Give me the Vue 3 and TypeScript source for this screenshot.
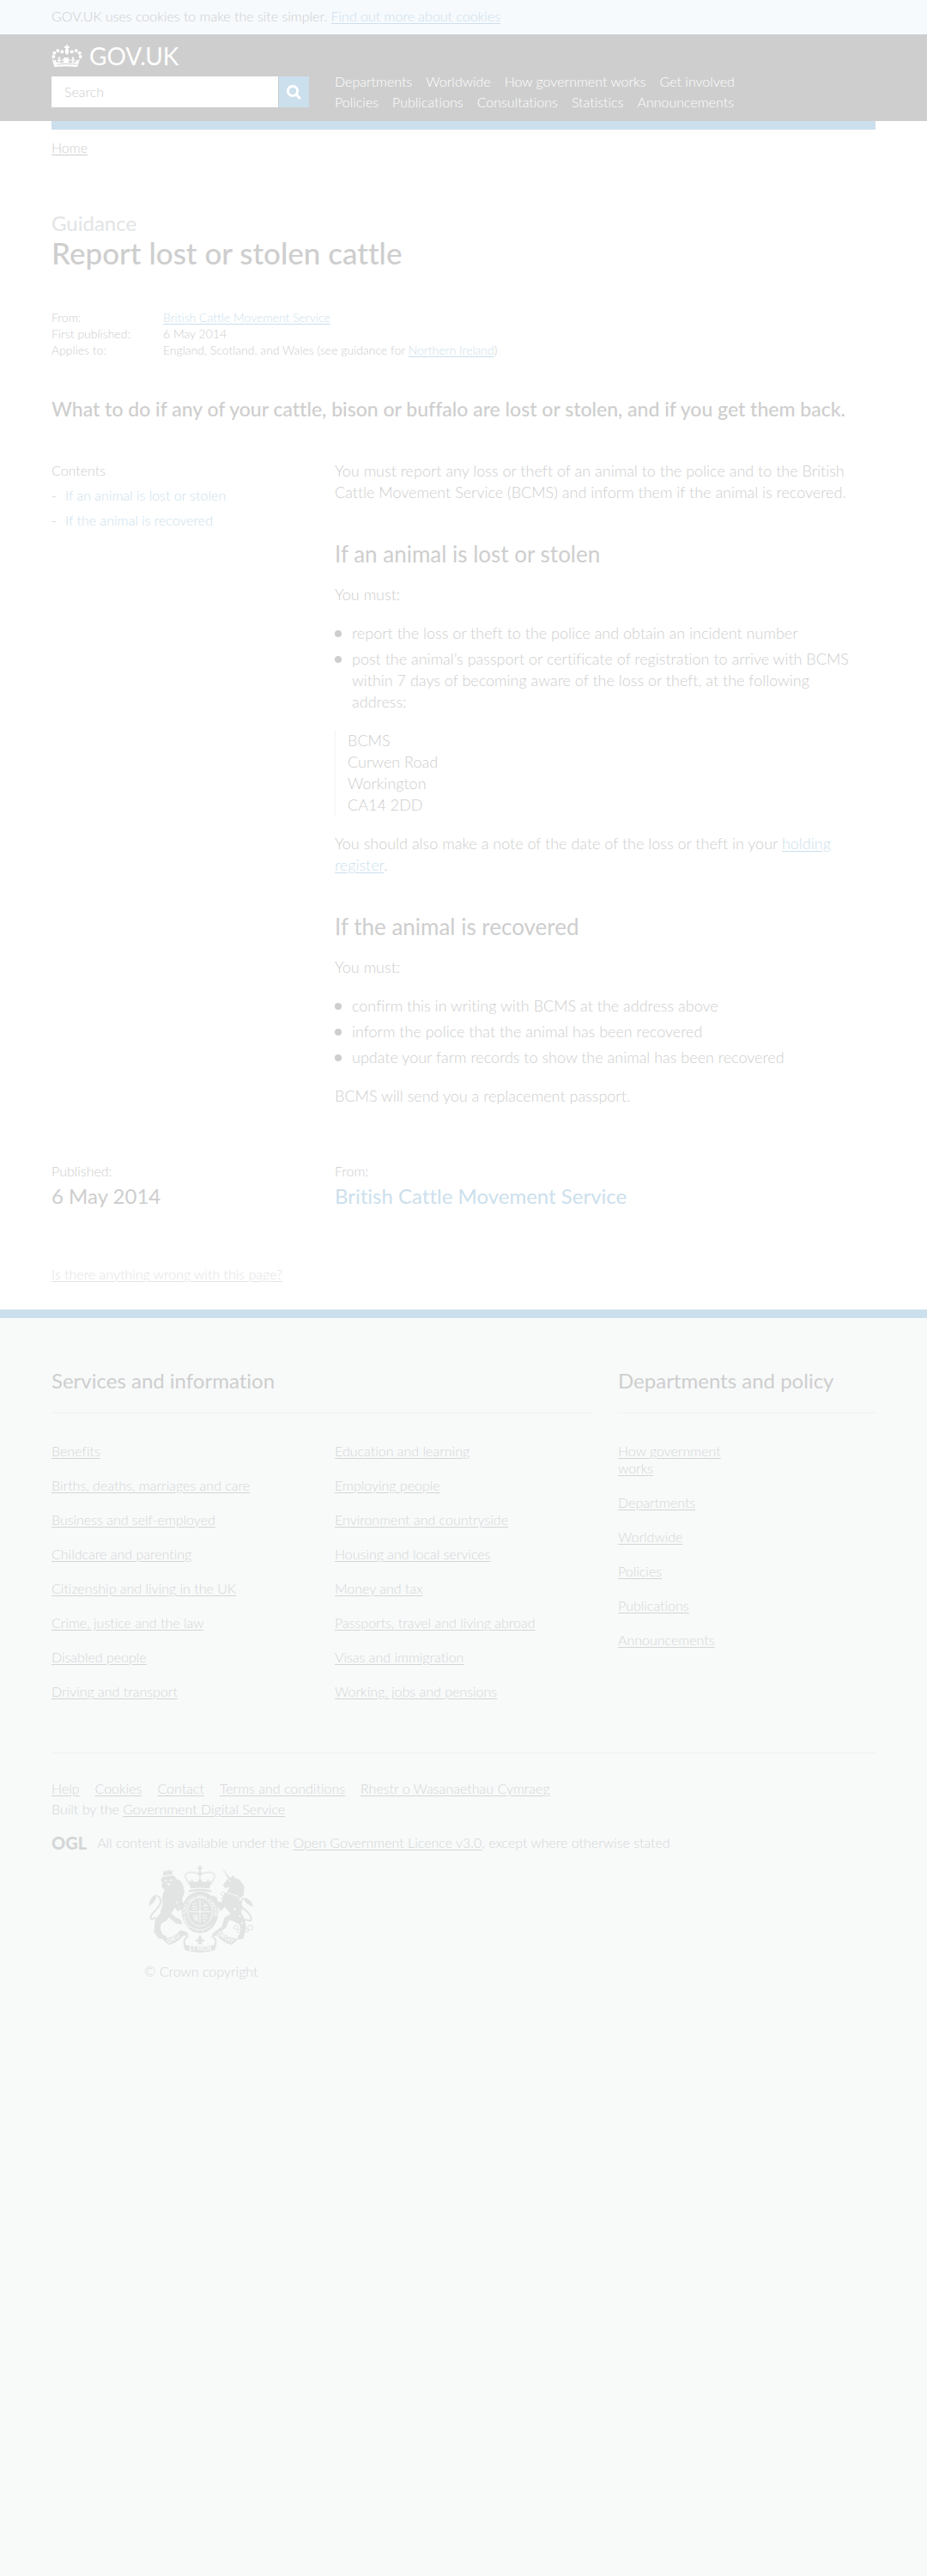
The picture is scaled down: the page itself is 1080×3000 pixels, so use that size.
<script setup lang="ts">
import { ref } from 'vue'

const query = ref('')

const navigation: string[] = [
  'Departments', 'Worldwide', 'How government works', 'Get involved',
  'Policies', 'Publications', 'Consultations', 'Statistics', 'Announcements',
]

const contents = [
  { id: 'if-an-animal-is-lost-or-stolen', title: 'If an animal is lost or stolen' },
  { id: 'if-the-animal-is-recovered', title: 'If the animal is recovered' },
]

const services: string[][] = [
  [
    'Benefits', 'Births, deaths, marriages and care', 'Business and self-employed',
    'Childcare and parenting', 'Citizenship and living in the UK',
    'Crime, justice and the law', 'Disabled people', 'Driving and transport',
  ],
  [
    'Education and learning', 'Employing people', 'Environment and countryside',
    'Housing and local services', 'Money and tax',
    'Passports, travel and living abroad', 'Visas and immigration',
    'Working, jobs and pensions',
  ],
]

const policy: string[] = [
  'How government works', 'Departments', 'Worldwide', 'Policies', 'Publications', 'Announcements',
]

const support: string[] = [
  'Help', 'Cookies', 'Contact', 'Terms and conditions', 'Rhestr o Wasanaethau Cymraeg',
]

const crownPearls = [
  [37, 78], [40, 65], [52, 57], [67, 61], [101, 61], [116, 57], [128, 65], [131, 78],
]
</script>

<template>
  <div class="page">
    <div class="cookie-bar">
      <p class="wrap">GOV.UK uses cookies to make the site simpler. <a href="#">Find out more about cookies</a></p>
    </div>

    <header class="site-header">
      <div class="wrap columns">
        <div class="brand">
          <a class="logo" href="#">
            <svg class="crown" viewBox="31 36 106 78" aria-hidden="true">
              <circle v-for="([cx, cy], i) in crownPearls" :key="i" :cx="cx" :cy="cy" r="6" />
              <path d="M81 36h6l-1 6 7-1v7l-6-1 3 8q3 10-6 17-9-7-6-17l3-8-6 1v-7l7 1z" />
              <path fill-rule="evenodd" d="M32 84l8 8 5-4 1 9 8 2 2-6-6 1v-6l6 1-3-8 4-3 4 3-3 8 6-1v6l-6-1 2 6 10 0 4-7-6 1v-7l7 2-3-7h18l-3 7 7-2v7l-6-1 4 7h10l2-6-6 1v-6l6 1-3-8 4-3 4 3-3 8 6-1v6l-6-1 2 6 8-2 1-9 5 4 8-8-10 30q-40-5-80 0zM49 104q35-5 70 0v3q-35-5-70 0z" />
            </svg>
            <span>GOV.UK</span>
          </a>
          <form class="search" @submit.prevent>
            <input v-model="query" type="search" placeholder="Search" aria-label="Search">
            <button type="submit" aria-label="Search">
              <svg viewBox="0 0 17 17" aria-hidden="true">
                <circle cx="7" cy="7" r="5.6" />
                <path d="M11 11l5 5" />
              </svg>
            </button>
          </form>
        </div>
        <nav>
          <ul>
            <li v-for="item in navigation" :key="item"><a href="#">{{ item }}</a></li>
          </ul>
        </nav>
      </div>
    </header>

    <div class="wrap">
      <div class="accent" />
      <p class="breadcrumb"><a href="#">Home</a></p>

      <main>
        <p class="kind">Guidance</p>
        <h1>Report lost or stolen cattle</h1>

        <dl class="meta">
          <dt>From:</dt>
          <dd><a href="#">British Cattle Movement Service</a></dd>
          <dt>First published:</dt>
          <dd>6 May 2014</dd>
          <dt>Applies to:</dt>
          <dd>England, Scotland, and Wales (see guidance for <a href="#">Northern Ireland</a>)</dd>
        </dl>

        <p class="lead">What to do if any of your cattle, bison or buffalo are lost or stolen, and if you get them back.</p>

        <div class="columns">
          <aside class="contents">
            <p>Contents</p>
            <ul>
              <li v-for="entry in contents" :key="entry.id"><a :href="`#${entry.id}`">{{ entry.title }}</a></li>
            </ul>
          </aside>

          <article class="prose">
            <p>You must report any loss or theft of an animal to the police and to the British Cattle Movement Service (BCMS) and inform them if the animal is recovered.</p>

            <h2 :id="contents[0].id">{{ contents[0].title }}</h2>
            <p>You must:</p>
            <ul>
              <li>report the loss or theft to the police and obtain an incident number</li>
              <li>post the animal’s passport or certificate of registration to arrive with BCMS within 7 days of becoming aware of the loss or theft, at the following address:</li>
            </ul>
            <address>BCMS<br>Curwen Road<br>Workington<br>CA14 2DD</address>
            <p>You should also make a note of the date of the loss or theft in your <a href="#">holding register</a>.</p>

            <h2 :id="contents[1].id">{{ contents[1].title }}</h2>
            <p>You must:</p>
            <ul>
              <li>confirm this in writing with BCMS at the address above</li>
              <li>inform the police that the animal has been recovered</li>
              <li>update your farm records to show the animal has been recovered</li>
            </ul>
            <p>BCMS will send you a replacement passport.</p>
          </article>
        </div>

        <dl class="columns origin">
          <div>
            <dt>Published:</dt>
            <dd>6 May 2014</dd>
          </div>
          <div>
            <dt>From:</dt>
            <dd><a href="#">British Cattle Movement Service</a></dd>
          </div>
        </dl>
      </main>

      <p class="report"><a href="#">Is there anything wrong with this page?</a></p>
    </div>

    <footer>
      <div class="wrap">
        <div class="directory">
          <section class="services">
            <h2>Services and information</h2>
            <div class="lists">
              <ul v-for="(column, i) in services" :key="i">
                <li v-for="item in column" :key="item"><a href="#">{{ item }}</a></li>
              </ul>
            </div>
          </section>
          <section class="policy">
            <h2>Departments and policy</h2>
            <div class="lists">
              <ul>
                <li v-for="item in policy" :key="item"><a href="#">{{ item }}</a></li>
              </ul>
            </div>
          </section>
        </div>

        <div class="footer-meta">
          <ul class="support">
            <li v-for="item in support" :key="item"><a href="#">{{ item }}</a></li>
          </ul>
          <p class="built">Built by the <a href="#">Government Digital Service</a></p>
          <p class="licence">
            <strong>OGL</strong>
            <span>All content is available under the <a href="#">Open Government Licence v3.0</a>, except where otherwise stated</span>
          </p>
          <a class="copyright" href="#">
            <svg class="arms" viewBox="45 36 375 306" aria-hidden="true">
              <!-- imperial crown -->
              <g class="solid">
                <path d="M225 37h6v7h6v6h-6v10h-6V50h-6v-6h6z" />
                <circle cx="228" cy="65" r="7" />
                <path d="M190 99q38-8 76 0l-5 19q-33-5-66 0zM182 101l8-3v-9l6 7 4-12 5 12 8-3 5 3 10-15 10 15 5-3 8 3 5-12 4 12 6-7v9l8 3-9 3h-74z" />
                <path d="M190 123q38-7 76 0l3 8q-41-9-82 0z" />
              </g>
              <g class="pearls">
                <path d="M190 98q-26-28 0-36 20-3 34 8M266 98q26-28 0-36-20-3-34 8M228 72v20" />
              </g>
              <!-- lion -->
              <g class="solid">
                <path d="M99 54l6 8 5-10 6 7 4-9 6 8 7-5-2 16-32 4z" />
                <path d="M97 77l37-5q8 4 12 13l14 6 10 18 4 22-9 25 10 30-5 11-13-8-8-30-7 22-14 24 14 13 20 10 3 16-20-3-26-22-8 11-17 9-5 18 8 22 15 5-4 11-24-2-17-23 4-43 17-21 9-32-1-28 8-24-11-11 4-14-7-7z" />
                <path d="M49 180q3-34 28-42-1 26-28 42zM136 179l20-15 15 5-7 11-12 2 8 12-11 3z" />
              </g>
              <path class="tail" d="M80 143q22 17 2 40t-24 29q-10 20 17 8" />
              <path class="paper" d="M105 87l8 3-5 5zM124 85l8 5-9 2zM111 98l17 5-9 5z" />
              <!-- unicorn -->
              <g class="solid">
                <path d="M303 43l32 41-7 4z" />
                <path d="M332 82l12-10 5 9 18 7 16 23-2 30-13 12-51-15 15-25-18 3-6-11 14-17z" />
                <path d="M314 134l49 18 10 18-1 32 14 26 3 28-9 37-18 3-3-9 13-20-7-24-25-13-11-1-10 26-24 19-14-6 23-17 9-31 22-14-20-23-16 14-11-20-19-10-8-16 13-9 13 7 2 14 14 4z" />
                <path d="M414 182q-4-27-34-33 5 25 34 33z" />
              </g>
              <path class="tail" d="M380 151q-20 21 2 39t24 28q7 19-20 8" />
              <path class="collar" d="M319 130l44 16" />
              <path class="paper" d="M326 93l9-4 1 5zM345 190l5-4 4 6-5 3zM363 213l5-3 3 5-4 3zM371 238l5-3 2 5-4 2z" />
              <g class="chain">
                <circle cx="309" cy="137" r="7" /><circle cx="309" cy="153" r="5" />
                <circle cx="302" cy="172" r="5" /><circle cx="371" cy="190" r="5" />
                <circle cx="353" cy="254" r="7" /><circle cx="364" cy="266" r="6" />
                <circle cx="377" cy="268" r="6" /><circle cx="391" cy="264" r="6" /><circle cx="404" cy="255" r="9" />
              </g>
              <!-- garter and shield -->
              <ellipse class="solid" cx="228" cy="201" rx="64" ry="73" />
              <ellipse class="rim" cx="228" cy="199" rx="43" ry="51" />
              <defs>
                <path id="garter-line" d="M193 252a50 58 0 1 1 70 0" />
              </defs>
              <text class="motto"><textPath href="#garter-line">HONI SOIT QUI MAL Y PENSE</textPath></text>
              <g class="rim">
                <path d="M228 158v80M190 199h76" />
                <path d="M201 174l16-6M199 183l20-4M202 191l15-3M240 170l13 8M238 181l16-4M242 191l12-2M204 209l8 20M211 208l4 22M218 208v24M238 210l16 4M237 220l16 3M239 230l8 2" />
                <path d="M190 249q38 28 76 0M214 264l3 8M239 264l-3 8" />
              </g>
              <!-- ribbon -->
              <g class="solid">
                <path d="M96 294q36-1 63-29 17-2 29 13l-5 8-12-4q-24 28-53 33z" />
                <path d="M362 294q-36-1-63-29-17-2-29 13l5 8 12-4q24 28 53 33z" />
                <path d="M169 309q5 2 10 7 49 8 98 0 5-5 10-7l-7 25q-52 16-104 0z" />
                <path d="M228 279l7 12-3 8q8-8 12 0-3 7-12 6l5 8h-18l5-8q-9 1-12-6 4-8 12 0l-3-8z" />
              </g>
              <path class="tail" d="M187 285q-22 14-11 28M269 285q22 14 11 28" />
              <text class="ribbon" transform="translate(117 311) rotate(-30)">DIEU</text>
              <text class="ribbon" x="190" y="336">ET MON</text>
              <text class="ribbon" transform="translate(287 280) rotate(30)">DROIT</text>
            </svg>
            <span>© Crown copyright</span>
          </a>
        </div>
      </div>
    </footer>
  </div>
</template>

<style>
html {
  background: #f8fafa;
}

body {
  margin: 0;
}
</style>

<style scoped>
.page {
  background: #fff;
  color: #cecece;
  font: 300 16px/20px Lato, 'Liberation Sans', sans-serif;
  font-variant-ligatures: none;
}

.wrap {
  width: min(960px, 100% - 60px);
  margin: 0 auto;
}

.columns {
  display: grid;
  grid-template-columns: 11fr 21fr;
}

p,
h1,
h2,
ul,
dl,
dd {
  margin: 0;
  padding: 0;
}

ul {
  list-style: none;
}

a {
  color: #ccdfed;
  text-underline-offset: 2px;
}

.cookie-bar {
  padding: 9px 0 11px;
  background: #f7fafd;
}

.site-header {
  padding-bottom: 10px;
  background: #cecece;
}

.site-header a {
  color: #fff;
  text-decoration: none;
}

.logo {
  display: flex;
  align-items: center;
  gap: 8px;
  height: 49px;
  font-size: 28px;
  font-weight: 400;
}

.crown {
  width: 36px;
  height: 26px;
  fill: #fff;
}

.search {
  display: flex;
  gap: 1px;
  width: 300px;
  height: 36px;
}

.search input {
  flex: 1;
  min-width: 0;
  padding: 0 15px;
  border: 0;
  border-radius: 0;
  background: #fff;
  color: #cecece;
  font: inherit;
  appearance: none;
}

.search input::placeholder {
  color: #cecece;
}

.search button {
  display: grid;
  place-items: center;
  width: 35px;
  padding: 0;
  border: 0;
  background: #ccdfed;
}

.search svg {
  width: 17px;
  height: 17px;
  fill: none;
  stroke: #fff;
  stroke-width: 3;
}

nav {
  max-width: 500px;
  padding-top: 43px;
  line-height: 24px;
}

nav ul {
  display: flex;
  flex-wrap: wrap;
  column-gap: 16px;
}

.accent {
  height: 10px;
  background: #ccdfed;
}

.breadcrumb {
  padding: 11px 0 64px;
}

.breadcrumb a {
  color: #cecece;
}

.kind {
  color: #e2e4e5;
  font-size: 24px;
  font-weight: 400;
  line-height: 28px;
}

h1 {
  font-size: 35px;
  font-weight: 500;
  line-height: 40px;
}

.meta {
  display: grid;
  grid-template-columns: 130px 1fr;
  margin-top: 46px;
  font-size: 14px;
  line-height: 19px;
}

.lead {
  margin: 44px 0 45px;
  font-size: 23px;
  font-weight: 500;
  line-height: 30px;
}

.contents {
  padding-top: 2px;
}

.contents li {
  display: flex;
  margin-top: 9px;
}

.contents li::before {
  content: '-';
  width: 16px;
}

.contents a {
  text-decoration: none;
}

.prose {
  padding-right: 15px;
  font-size: 18px;
  line-height: 25px;
}

.prose h2 {
  margin: 44px 0 20px;
  font-size: 26px;
  font-weight: 400;
  line-height: 30px;
}

.prose ul {
  display: grid;
  gap: 5px;
  margin: 20px 0;
}

.prose li {
  display: flex;
  gap: 12px;
}

.prose li::before {
  content: '';
  flex: none;
  width: 8px;
  height: 8px;
  margin-top: 9px;
  border-radius: 50%;
  background: #cecece;
}

.prose address {
  margin: 20px 0;
  padding-left: 14px;
  border-left: 1px solid #f2f3f3;
  font-style: normal;
}

.origin {
  margin-top: 65px;
}

.origin dd {
  margin-top: 4px;
  font-size: 24px;
  font-weight: 400;
  line-height: 30px;
}

.origin a {
  text-decoration: none;
}

.report {
  padding: 66px 0 31px;
}

.report a {
  color: #e2e4e5;
}

footer {
  padding: 58px 0 60px;
  border-top: 10px solid #ccdfed;
  background: #f8fafa;
  color: #d4d6d6;
}

footer a {
  color: #d4d6d6;
}

.directory {
  display: grid;
  grid-template-columns: 11fr 5fr;
}

footer h2 {
  padding-bottom: 22px;
  border-bottom: 1px solid #f0f2f2;
  color: #cecece;
  font-size: 24px;
  font-weight: 400;
  line-height: 30px;
}

.services h2 {
  margin-right: 30px;
}

.lists {
  display: grid;
  grid-template-columns: 1fr 1fr;
  padding: 34px 0 61px;
}

.lists ul {
  display: grid;
  align-content: start;
  gap: 20px;
}

.policy li {
  padding-right: 15px;
}

.footer-meta {
  padding-top: 29px;
  border-top: 1px solid #f0f2f2;
}

.support {
  display: flex;
  flex-wrap: wrap;
  column-gap: 18px;
  line-height: 24px;
}

.built {
  line-height: 24px;
}

.licence {
  display: flex;
  gap: 12px;
  margin: 17px 0 16px;
}

.licence strong {
  font-size: 20px;
  font-weight: 900;
}

.copyright {
  display: inline-flex;
  flex-direction: column;
  align-items: center;
  gap: 12px;
  margin-left: 108px;
  text-decoration: none;
}

.arms {
  width: 125px;
  height: 102px;
}

.arms .solid {
  fill: #e2e4e4;
}

.arms .pearls {
  fill: none;
  stroke: #e2e4e4;
  stroke-width: 6;
  stroke-dasharray: 0 7;
  stroke-linecap: round;
}

.arms .tail {
  fill: none;
  stroke: #e2e4e4;
  stroke-width: 6;
}

.arms .paper {
  fill: #f8fafa;
}

.arms .collar {
  stroke: #f8fafa;
  stroke-width: 3;
}

.arms .chain {
  fill: none;
  stroke: #e2e4e4;
  stroke-width: 3;
}

.arms .rim {
  fill: none;
  stroke: #f8fafa;
  stroke-width: 3;
}

.arms .motto,
.arms .ribbon {
  fill: #f8fafa;
  font-size: 16px;
  font-weight: 700;
}

.arms .ribbon {
  font-size: 20px;
}
</style>
